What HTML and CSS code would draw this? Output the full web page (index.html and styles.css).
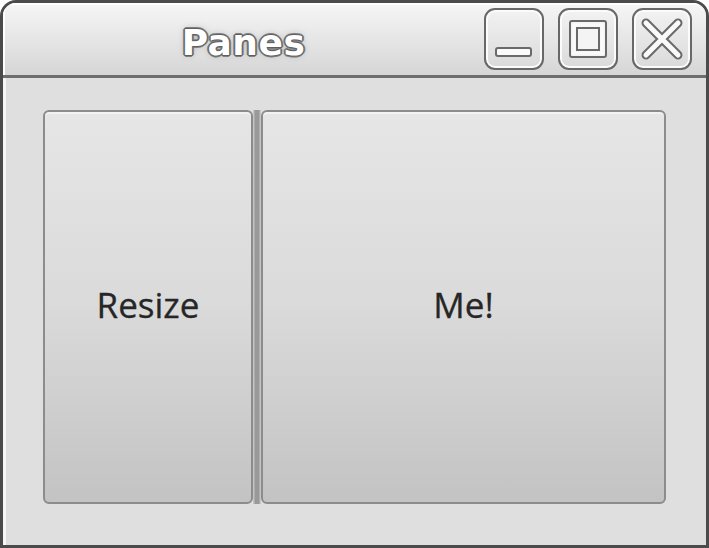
FILE: index.html
```html
<!DOCTYPE html>
<html>
<head>
<meta charset="utf-8">
<link rel="stylesheet" href="styles.css">
</head>
<body>
<div class="window">
  <div class="titlebar">
    <div class="title">Panes</div>
    <div class="controls">
      <div class="wbtn">
        <svg width="56" height="58" viewBox="0 0 56 58">
          <rect x="10" y="38" width="35" height="8" rx="2" fill="#fafafa" stroke="#6a6a6a" stroke-width="2"/>
        </svg>
      </div>
      <div class="wbtn">
        <svg width="56" height="58" viewBox="0 0 56 58">
          <rect x="10" y="11" width="36" height="36" rx="2" fill="#f4f4f4" stroke="#6a6a6a" stroke-width="2"/>
          <rect x="14" y="15" width="28" height="28" fill="none" stroke="#fafafa" stroke-width="3"/>
          <rect x="17" y="18" width="22" height="22" fill="none" stroke="#6a6a6a" stroke-width="2"/>
        </svg>
      </div>
      <div class="wbtn">
        <svg width="56" height="58" viewBox="0 0 56 58">
          <path d="M12 13 L44 45 M44 13 L12 45" stroke="#6a6a6a" stroke-width="9" stroke-linecap="round" fill="none"/>
          <path d="M12 13 L44 45 M44 13 L12 45" stroke="#fafafa" stroke-width="5" stroke-linecap="round" fill="none"/>
        </svg>
      </div>
    </div>
  </div>
  <div class="content">
    <div class="panes">
      <div class="pane pane-left"><span>Resize</span></div>
      <div class="divider"></div>
      <div class="pane pane-right"><span>Me!</span></div>
    </div>
  </div>
</div>
</body>
</html>
```
FILE: styles.css
```css
html, body {
  margin: 0;
  padding: 0;
  background: #ffffff;
}
.window {
  width: 709px;
  height: 548px;
  box-sizing: border-box;
  border: 3px solid #4b4b4b;
  border-radius: 16px 16px 0 0;
  background: #dfdfdf;
  display: flex;
  flex-direction: column;
  overflow: hidden;
  font-family: "Open Sans", "DejaVu Sans", sans-serif;
}
.titlebar {
  height: 72px;
  flex: none;
  display: flex;
  align-items: center;
  border-bottom: 3px solid #6e6e6e;
  background: linear-gradient(#f6f6f6 0%, #e6e6e6 50%, #d6d6d6 100%);
  box-shadow: inset 2px 2px 0 #ffffff;
}
.title {
  flex: 1;
  text-align: center;
  font-family: "DejaVu Sans", sans-serif;
  font-weight: bold;
  font-size: 36px;
  letter-spacing: 0.5px;
  color: #ffffff;
  margin-top: 6px;
  text-shadow:
    1px 0 0 #5f5f5f, -1px 0 0 #5f5f5f, 0 1px 0 #5f5f5f, 0 -1px 0 #5f5f5f,
    2px 0 0 #808080, -2px 0 0 #808080, 0 2px 0 #808080, 0 -2px 0 #808080,
    1px 1px 0 #5f5f5f, -1px -1px 0 #5f5f5f, 1px -1px 0 #5f5f5f, -1px 1px 0 #5f5f5f,
    0 0 7px #b0b0b0;
}
.controls {
  display: flex;
  gap: 14px;
  padding-right: 14px;
  margin-top: -1px;
}
.wbtn {
  width: 56px;
  height: 58px;
  border: 2px solid #686868;
  border-radius: 11px;
  background: linear-gradient(#f2f2f2, #dadada);
  box-shadow: inset 0 0 0 2px #fbfbfb;
  display: flex;
}
.content {
  flex: 1;
  display: flex;
  padding: 32px 40px 41px 40px;
  box-shadow: inset 3px 0 0 #f6f6f6;
}
.panes {
  flex: 1;
  display: flex;
}
.pane {
  box-sizing: border-box;
  border: 2px solid #8c8c8c;
  border-radius: 6px;
  background: linear-gradient(#e6e6e6 0%, #dadada 50%, #c3c3c3 100%);
  display: flex;
  align-items: center;
  justify-content: center;
  font-size: 35px;
  color: #262626;
  box-shadow: inset 0 2px 0 #f2f2f2;
  -webkit-text-stroke: 0.3px #262626;
}
.pane span {
  margin-top: -6px;
}
.pane-left {
  width: 210px;
}
.pane-right {
  flex: 1;
}
.divider {
  width: 8px;
  background: linear-gradient(90deg, #d0d0d0 0%, #999999 30%, #999999 70%, #d0d0d0 100%);
}
```
